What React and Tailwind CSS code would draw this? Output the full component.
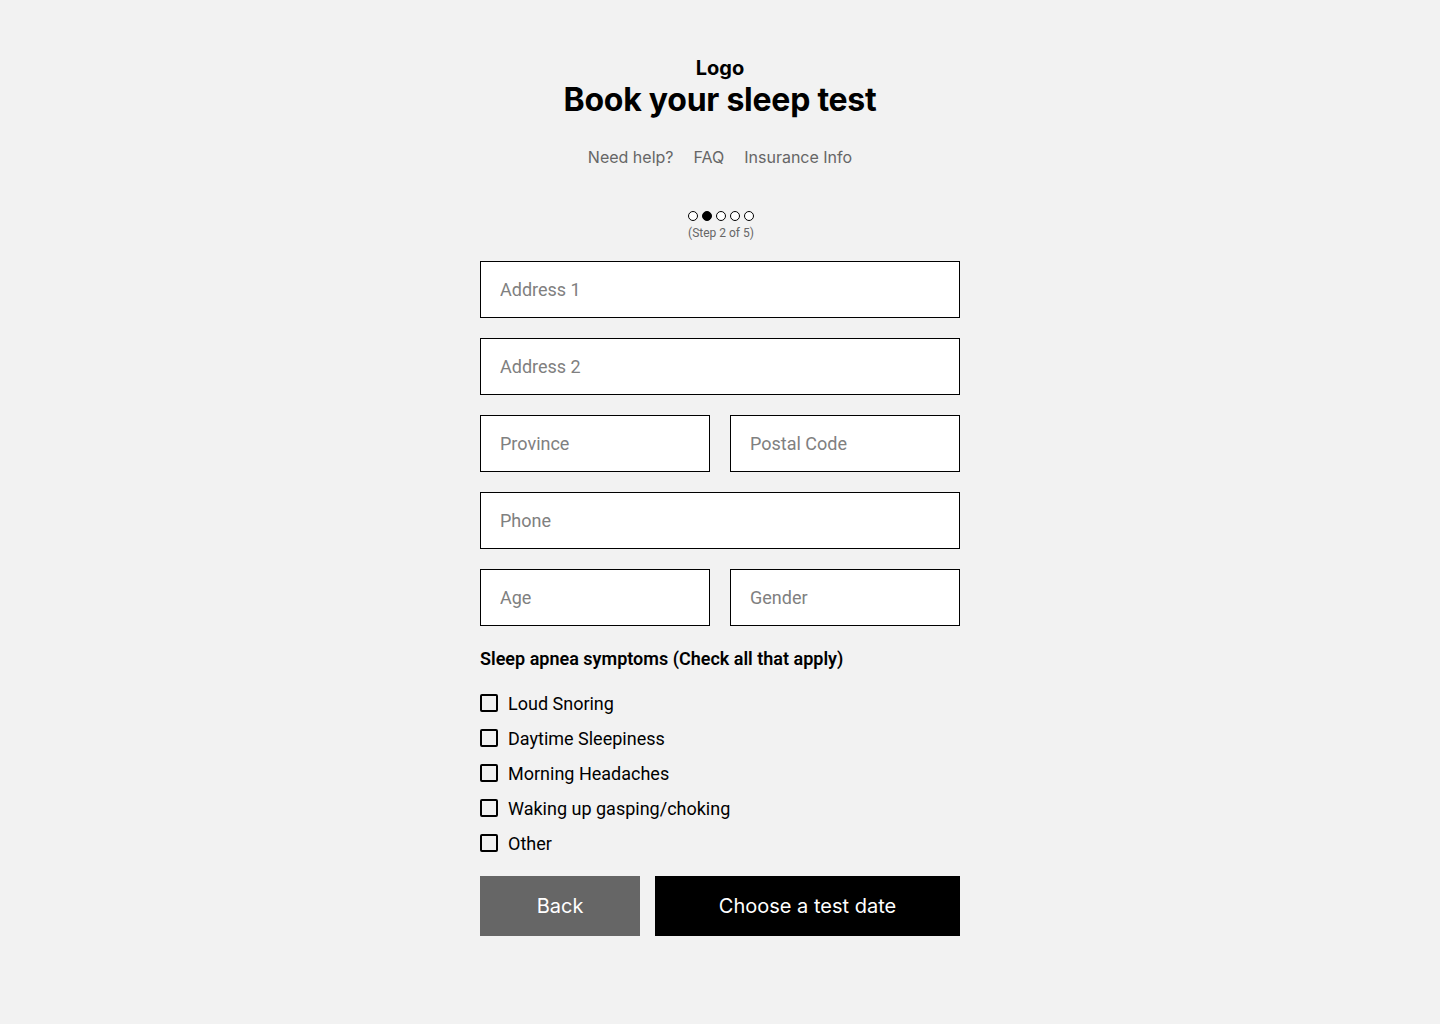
const inter = "font-[family-name:Inter,sans-serif]";
const roboto = "font-[family-name:Roboto,sans-serif]";

function Field({ placeholder, className = "" }) {
  return (
    <input
      type="text"
      placeholder={placeholder}
      className={`h-[57px] w-full border border-black bg-white pl-[19px] pr-5 text-[18px] text-black placeholder:text-[#808080] outline-none ${roboto} ${className}`}
    />
  );
}

const symptoms = [
  "Loud Snoring",
  "Daytime Sleepiness",
  "Morning Headaches",
  "Waking up gasping/choking",
  "Other",
];

export default function App() {
  return (
    <div className="min-h-screen w-full bg-[#f2f2f2] pt-[56px]">
      <div className="mx-auto flex w-[480px] flex-col items-center">
        <div className={`text-[20px] font-bold leading-6 text-black ${inter}`}>Logo</div>
        <h1 className={`text-[32px] font-bold leading-10 tracking-[-0.25px] text-black ${inter}`}>Book your sleep test</h1>

        <nav className={`mt-[25px] flex gap-5 text-[16px] leading-6 text-[#666] ${inter}`}>
          <a href="#">Need help?</a>
          <a href="#">FAQ</a>
          <a href="#">Insurance Info</a>
        </nav>

        <div className="mt-[42px] flex gap-[4px] pl-[2px]">
          {[0, 1, 2, 3, 4].map((i) => (
            <span
              key={i}
              className={`h-[10px] w-[10px] rounded-full border border-black ${i === 1 ? "bg-black" : "bg-white"}`}
            />
          ))}
        </div>
        <div className={`mt-1 pl-[2px] text-[12px] leading-4 text-[#666] ${roboto}`}>(Step 2 of 5)</div>

        <form className="mt-[20px] flex w-full flex-col gap-5">
          <Field placeholder="Address 1" />
          <Field placeholder="Address 2" />
          <div className="grid grid-cols-2 gap-5">
            <Field placeholder="Province" />
            <Field placeholder="Postal Code" />
          </div>
          <Field placeholder="Phone" />
          <div className="grid grid-cols-2 gap-5">
            <Field placeholder="Age" />
            <Field placeholder="Gender" />
          </div>
        </form>

        <div className={`mt-[21px] w-full text-[18px] font-semibold leading-6 text-black ${roboto}`}>
          Sleep apnea symptoms (Check all that apply)
        </div>

        <div className="mt-5 flex w-full flex-col gap-[11px]">
          {symptoms.map((s) => (
            <label key={s} className={`flex h-6 items-center gap-[10px] text-[18px] text-black ${roboto}`}>
              <span className="h-[18px] w-[18px] rounded-[2px] border-2 border-black bg-transparent" />
              {s}
            </label>
          ))}
        </div>

        <div className="mt-[21px] flex w-full gap-[15px]">
          <button className={`h-[60px] w-[160px] bg-[#666666] text-[20px] text-white ${inter}`}>Back</button>
          <button className={`h-[60px] flex-1 bg-black text-[20px] text-white ${inter}`}>Choose a test date</button>
        </div>
      </div>
    </div>
  );
}
